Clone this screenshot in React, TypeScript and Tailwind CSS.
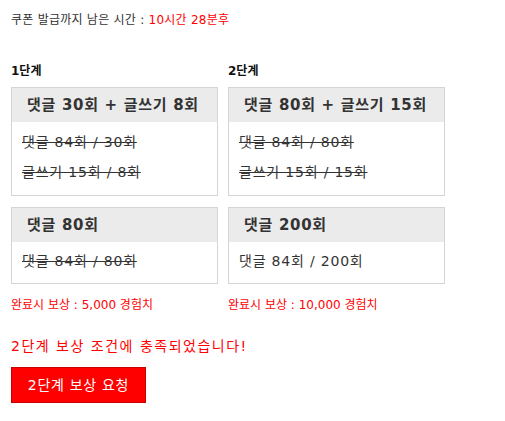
import React from "react";

const font = { fontFamily: '"DejaVu Sans", "Noto Sans CJK KR", sans-serif' };

function Box({
  title,
  lines,
  strike,
}: {
  title: string;
  lines: string[];
  strike: boolean;
}) {
  return (
    <div className="border border-[#d5d5d5] bg-white">
      <div className="h-[34px] bg-[#ebebeb] flex items-center pl-[15px] text-[15px] font-bold tracking-[0.7px] text-[#333]">
        {title}
      </div>
      <div className={lines.length > 1 ? "pt-[5px] pb-[8px] pl-[10px]" : "pt-[4px] pb-[7px] pl-[10px]"}>
        {lines.map((l, i) => (
          <div
            key={i}
            className={
              "text-[14px] leading-[30px] tracking-[0.8px] text-[#333] " + (strike ? "line-through" : "")
            }
          >
            {l}
          </div>
        ))}
      </div>
    </div>
  );
}

export default function App() {
  return (
    <div className="bg-white min-h-[421px] px-[11px] pt-[12px]" style={font}>
      <div className="text-[12px] leading-[16px] tracking-[0.25px] text-[#333]">
        쿠폰 발급까지 남은 시간 : <span className="text-[#ff0000]">10시간 28분후</span>
      </div>
      <div className="flex gap-[10px] mt-[35px]">
        <div className="w-[207px] flex flex-col">
          <div className="text-[12px] leading-[16px] font-bold text-[#111] mb-[8px]">1단계</div>
          <Box title="댓글 30회 + 글쓰기 8회" lines={["댓글 84회 / 30회", "글쓰기 15회 / 8회"]} strike />
          <div className="mt-[11px]">
            <Box title="댓글 80회" lines={["댓글 84회 / 80회"]} strike />
          </div>
          <div className="mt-[13px] text-[12px] leading-[16px] text-[#ff0000]">
            완료시 보상 : 5,000 경험치
          </div>
        </div>
        <div className="w-[217px] flex flex-col">
          <div className="text-[12px] leading-[16px] font-bold text-[#111] mb-[8px]">2단계</div>
          <Box title="댓글 80회 + 글쓰기 15회" lines={["댓글 84회 / 80회", "글쓰기 15회 / 15회"]} strike />
          <div className="mt-[11px]">
            <Box title="댓글 200회" lines={["댓글 84회 / 200회"]} strike={false} />
          </div>
          <div className="mt-[13px] text-[12px] leading-[16px] text-[#ff0000]">
            완료시 보상 : 10,000 경험치
          </div>
        </div>
      </div>
      <div className="mt-[23px] text-[14px] leading-[20px] tracking-[1.5px] text-[#ff0000]">
        2단계 보상 조건에 충족되었습니다!
      </div>
      <button
        className="mt-[11px] w-[135px] h-[36px] bg-[#ff0000] border border-[#c80000] text-white text-[14px] tracking-[0.7px] flex items-center justify-center"
        style={font}
      >
        2단계 보상 요청
      </button>
    </div>
  );
}
